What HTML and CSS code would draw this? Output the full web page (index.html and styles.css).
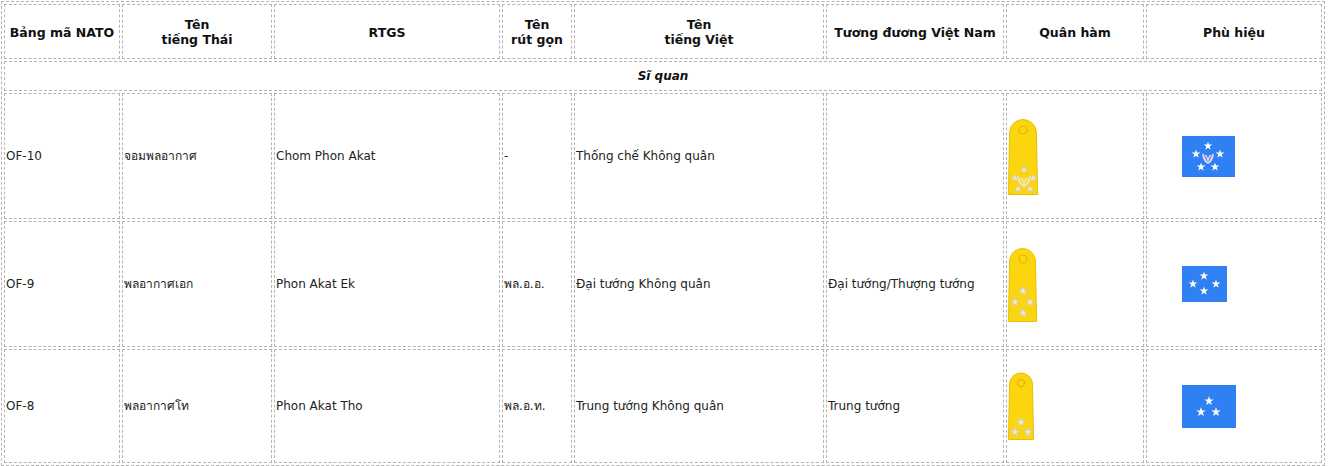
FILE: index.html
```html
<!DOCTYPE html>
<html lang="vi">
<head>
<meta charset="utf-8">
<title>Quân hàm Không quân Thái Lan</title>
<link rel="stylesheet" href="styles.css">
</head>
<body>
<svg class="defs" width="0" height="0" aria-hidden="true">
  <defs>
    <polygon id="star" points="0,-10 2.24,-3.09 9.51,-3.09 3.63,1.18 5.88,8.09 0,3.82 -5.88,8.09 -3.63,1.18 -9.51,-3.09 -2.24,-3.09"/>
  </defs>
</svg>
<table class="ranks">
  <thead>
    <tr class="head-row">
      <th class="c1">Bảng mã NATO</th>
      <th class="c2">Tên<br>tiếng Thái</th>
      <th class="c3">RTGS</th>
      <th class="c4">Tên<br>rút gọn</th>
      <th class="c5">Tên<br>tiếng Việt</th>
      <th class="c6">Tương đương Việt Nam</th>
      <th class="c7">Quân hàm</th>
      <th class="c8">Phù hiệu</th>
    </tr>
  </thead>
  <tbody>
    <tr class="group-row">
      <td colspan="8" class="group">Sĩ quan</td>
    </tr>
    <tr class="rank-row tall">
      <td>OF-10</td>
      <td>จอมพลอากาศ</td>
      <td>Chom Phon Akat</td>
      <td>-</td>
      <td>Thống chế Không quân</td>
      <td></td>
      <td class="pic">
        <svg class="ep" width="30" height="77" viewBox="0 0 30 77">
          <path d="M0.5 76.5 L1.5 15 A13.5 13.5 0 0 1 28.5 15 L29.5 76.5 Z" fill="#fbd60f" stroke="#e6bd08"/>
          <circle cx="15" cy="12" r="4" fill="none" stroke="#e2b60a" stroke-width="1.2"/>
          <path d="M10 58 Q11 66 16 68 Q21 66 22 58" fill="none" stroke="#ece8d8" stroke-width="2"/>
          <path d="M13 60 L16 65 L19 60" fill="none" stroke="#ece8d8" stroke-width="1.6"/>
          <use href="#star" transform="translate(16 52) scale(0.42)" fill="#ece8d8" stroke="#cfc8ac" stroke-width="1.2"/>
          <use href="#star" transform="translate(7 60) scale(0.42)" fill="#ece8d8" stroke="#cfc8ac" stroke-width="1.2"/>
          <use href="#star" transform="translate(25 60) scale(0.42)" fill="#ece8d8" stroke="#cfc8ac" stroke-width="1.2"/>
          <use href="#star" transform="translate(10 71) scale(0.42)" fill="#ece8d8" stroke="#cfc8ac" stroke-width="1.2"/>
          <use href="#star" transform="translate(22 71) scale(0.42)" fill="#ece8d8" stroke="#cfc8ac" stroke-width="1.2"/>
        </svg>
      </td>
      <td class="flagcell">
        <svg class="flag" width="53" height="41" viewBox="0 0 53 41">
          <rect width="53" height="41" fill="#2f80f3"/>
          <use href="#star" transform="translate(26 10) scale(0.46)" fill="#fff"/>
          <use href="#star" transform="translate(14 18) scale(0.46)" fill="#fff"/>
          <use href="#star" transform="translate(38 18) scale(0.46)" fill="#fff"/>
          <use href="#star" transform="translate(19 31) scale(0.46)" fill="#fff"/>
          <use href="#star" transform="translate(33 31) scale(0.46)" fill="#fff"/>
          <path d="M21 18 Q22 25 26 27 Q30 25 31 18" fill="none" stroke="#f1d6e6" stroke-width="1.8"/>
          <path d="M23.5 19 L26 24 L28.5 19" fill="none" stroke="#f1d6e6" stroke-width="1.6"/>
        </svg>
      </td>
    </tr>
    <tr class="rank-row tall">
      <td>OF-9</td>
      <td>พลอากาศเอก</td>
      <td>Phon Akat Ek</td>
      <td>พล.อ.อ.</td>
      <td>Đại tướng Không quân</td>
      <td>Đại tướng/Thượng tướng</td>
      <td class="pic">
        <svg class="ep" width="29" height="75" viewBox="0 0 29 75">
          <path d="M0.5 74.5 L1.5 14.5 A13 13 0 0 1 27.5 14.5 L28.5 74.5 Z" fill="#fbd60f" stroke="#e6bd08"/>
          <circle cx="15" cy="12" r="4" fill="none" stroke="#e2b60a" stroke-width="1.2"/>
          <use href="#star" transform="translate(15 44) scale(0.5)" fill="#ece8d8" stroke="#cfc8ac" stroke-width="1.2"/>
          <use href="#star" transform="translate(7 55) scale(0.5)" fill="#ece8d8" stroke="#cfc8ac" stroke-width="1.2"/>
          <use href="#star" transform="translate(22 55) scale(0.5)" fill="#ece8d8" stroke="#cfc8ac" stroke-width="1.2"/>
          <use href="#star" transform="translate(15 66) scale(0.5)" fill="#ece8d8" stroke="#cfc8ac" stroke-width="1.2"/>
        </svg>
      </td>
      <td class="flagcell">
        <svg class="flag" width="45" height="36" viewBox="0 0 45 36">
          <rect width="45" height="36" fill="#2f80f3"/>
          <use href="#star" transform="translate(22 10) scale(0.46)" fill="#fff"/>
          <use href="#star" transform="translate(11 18) scale(0.46)" fill="#fff"/>
          <use href="#star" transform="translate(34 18) scale(0.46)" fill="#fff"/>
          <use href="#star" transform="translate(22 25) scale(0.46)" fill="#fff"/>
        </svg>
      </td>
    </tr>
    <tr class="rank-row short">
      <td>OF-8</td>
      <td>พลอากาศโท</td>
      <td>Phon Akat Tho</td>
      <td>พล.อ.ท.</td>
      <td>Trung tướng Không quân</td>
      <td>Trung tướng</td>
      <td class="pic">
        <svg class="ep" width="26" height="68" viewBox="0 0 26 68">
          <path d="M0.5 67.5 L1.5 12.5 A11.5 11.5 0 0 1 24.5 12.5 L25.5 67.5 Z" fill="#fbd60f" stroke="#e6bd08"/>
          <circle cx="13" cy="11" r="3.6" fill="none" stroke="#e2b60a" stroke-width="1.2"/>
          <use href="#star" transform="translate(13 50) scale(0.5)" fill="#ece8d8" stroke="#cfc8ac" stroke-width="1.2"/>
          <use href="#star" transform="translate(7 60) scale(0.5)" fill="#ece8d8" stroke="#cfc8ac" stroke-width="1.2"/>
          <use href="#star" transform="translate(20 60) scale(0.5)" fill="#ece8d8" stroke="#cfc8ac" stroke-width="1.2"/>
        </svg>
      </td>
      <td class="flagcell">
        <svg class="flag" width="54" height="43" viewBox="0 0 54 43">
          <rect width="54" height="43" fill="#2f80f3"/>
          <use href="#star" transform="translate(27 16) scale(0.5)" fill="#fff"/>
          <use href="#star" transform="translate(19 27) scale(0.5)" fill="#fff"/>
          <use href="#star" transform="translate(34 27) scale(0.5)" fill="#fff"/>
        </svg>
      </td>
    </tr>
  </tbody>
</table>
</body>
</html>
```
FILE: styles.css
```css
html, body {
  margin: 0;
  padding: 0;
  background: #fff;
}

body {
  font-family: "DejaVu Sans", Verdana, sans-serif;
  font-size: 12px;
  color: #222;
}

.defs {
  position: absolute;
  width: 0;
  height: 0;
  overflow: hidden;
}

.ranks {
  margin: 1px;
  border: 1px dashed #b4b4b4;
  border-spacing: 2px;
  table-layout: fixed;
  width: 1324px;
}

.ranks th,
.ranks td {
  box-sizing: border-box;
  border: 1px dashed #b4b4b4;
  padding: 1px;
  vertical-align: middle;
  line-height: 15px;
}

.ranks th {
  font-weight: bold;
  text-align: center;
  color: #111;
  font-size: 12.5px;
  padding-top: 2px;
}

.c1 { width: 116px; }
.c2 { width: 150px; }
.c3 { width: 226px; }
.c4 { width: 70px; }
.c5 { width: 250px; }
.c6 { width: 178px; }
.c7 { width: 138px; }
.c8 { width: 176px; }

.head-row th { height: 55px; }

.group-row td {
  height: 30px;
}

.ranks .group {
  text-align: center;
  font-weight: bold;
  font-style: italic;
  color: #111;
  padding-top: 2px;
}

.tall td { height: 126px; }
.short td { height: 114px; }

.pic svg,
.flagcell svg {
  display: block;
}

.ranks .flagcell {
  padding-left: 35px;
}
```
